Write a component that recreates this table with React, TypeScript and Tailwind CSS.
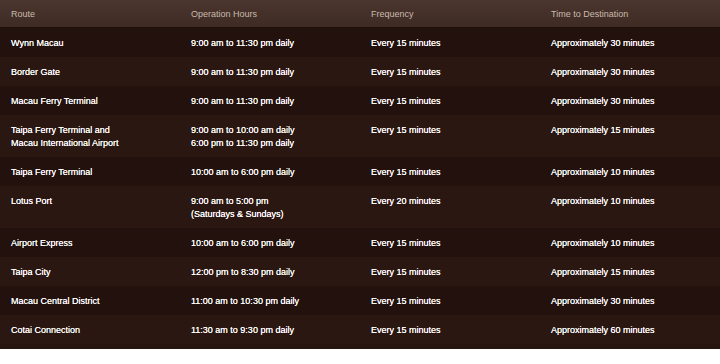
const rows: { route: string[]; hours: string[]; freq: string; time: string }[] = [
  { route: ['Wynn Macau'], hours: ['9:00 am to 11:30 pm daily'], freq: 'Every 15 minutes', time: 'Approximately 30 minutes' },
  { route: ['Border Gate'], hours: ['9:00 am to 11:30 pm daily'], freq: 'Every 15 minutes', time: 'Approximately 30 minutes' },
  { route: ['Macau Ferry Terminal'], hours: ['9:00 am to 11:30 pm daily'], freq: 'Every 15 minutes', time: 'Approximately 30 minutes' },
  {
    route: ['Taipa Ferry Terminal and', 'Macau International Airport'],
    hours: ['9:00 am to 10:00 am daily', '6:00 pm to 11:30 pm daily'],
    freq: 'Every 15 minutes',
    time: 'Approximately 15 minutes',
  },
  { route: ['Taipa Ferry Terminal'], hours: ['10:00 am to 6:00 pm daily'], freq: 'Every 15 minutes', time: 'Approximately 10 minutes' },
  { route: ['Lotus Port'], hours: ['9:00 am to 5:00 pm', '(Saturdays & Sundays)'], freq: 'Every 20 minutes', time: 'Approximately 10 minutes' },
  { route: ['Airport Express'], hours: ['10:00 am to 6:00 pm daily'], freq: 'Every 15 minutes', time: 'Approximately 10 minutes' },
  { route: ['Taipa City'], hours: ['12:00 pm to 8:30 pm daily'], freq: 'Every 15 minutes', time: 'Approximately 15 minutes' },
  { route: ['Macau Central District'], hours: ['11:00 am to 10:30 pm daily'], freq: 'Every 15 minutes', time: 'Approximately 30 minutes' },
  { route: ['Cotai Connection'], hours: ['11:30 am to 9:30 pm daily'], freq: 'Every 15 minutes', time: 'Approximately 60 minutes' },
];

function Cell({ lines }: { lines: string[] }) {
  return (
    <div className="px-[11px] pt-[9px] pb-[7px]">
      {lines.map((l) => (
        <div key={l}>{l}</div>
      ))}
    </div>
  );
}

export default function App() {
  return (
    <div className="min-h-screen bg-white font-['Liberation_Sans',Arial,sans-serif] text-[9px] leading-[13px]">
      <div className="w-[720px] bg-[#27150f] pb-[5px]">
        {/* header */}
        <div className="grid grid-cols-4 h-[28px] pt-[1px] items-center bg-gradient-to-b from-[#4a362e] to-[#3e2b23] border-b border-[#1d0e0a] text-[#c9baad]">
          <div className="px-[11px]">Route</div>
          <div className="px-[11px]">Operation Hours</div>
          <div className="px-[11px]">Frequency</div>
          <div className="px-[11px]">Time to Destination</div>
        </div>

        {rows.map((r, i) => (
          <div
            key={i}
            className={
              'grid grid-cols-4 text-white [text-shadow:0_0_0.3px_#fff] ' +
              (i % 2 === 0 ? 'bg-[#22110c]' : 'bg-[#2b1711]')
            }
          >
            <Cell lines={r.route} />
            <Cell lines={r.hours} />
            <Cell lines={[r.freq]} />
            <Cell lines={[r.time]} />
          </div>
        ))}
      </div>
    </div>
  );
}
